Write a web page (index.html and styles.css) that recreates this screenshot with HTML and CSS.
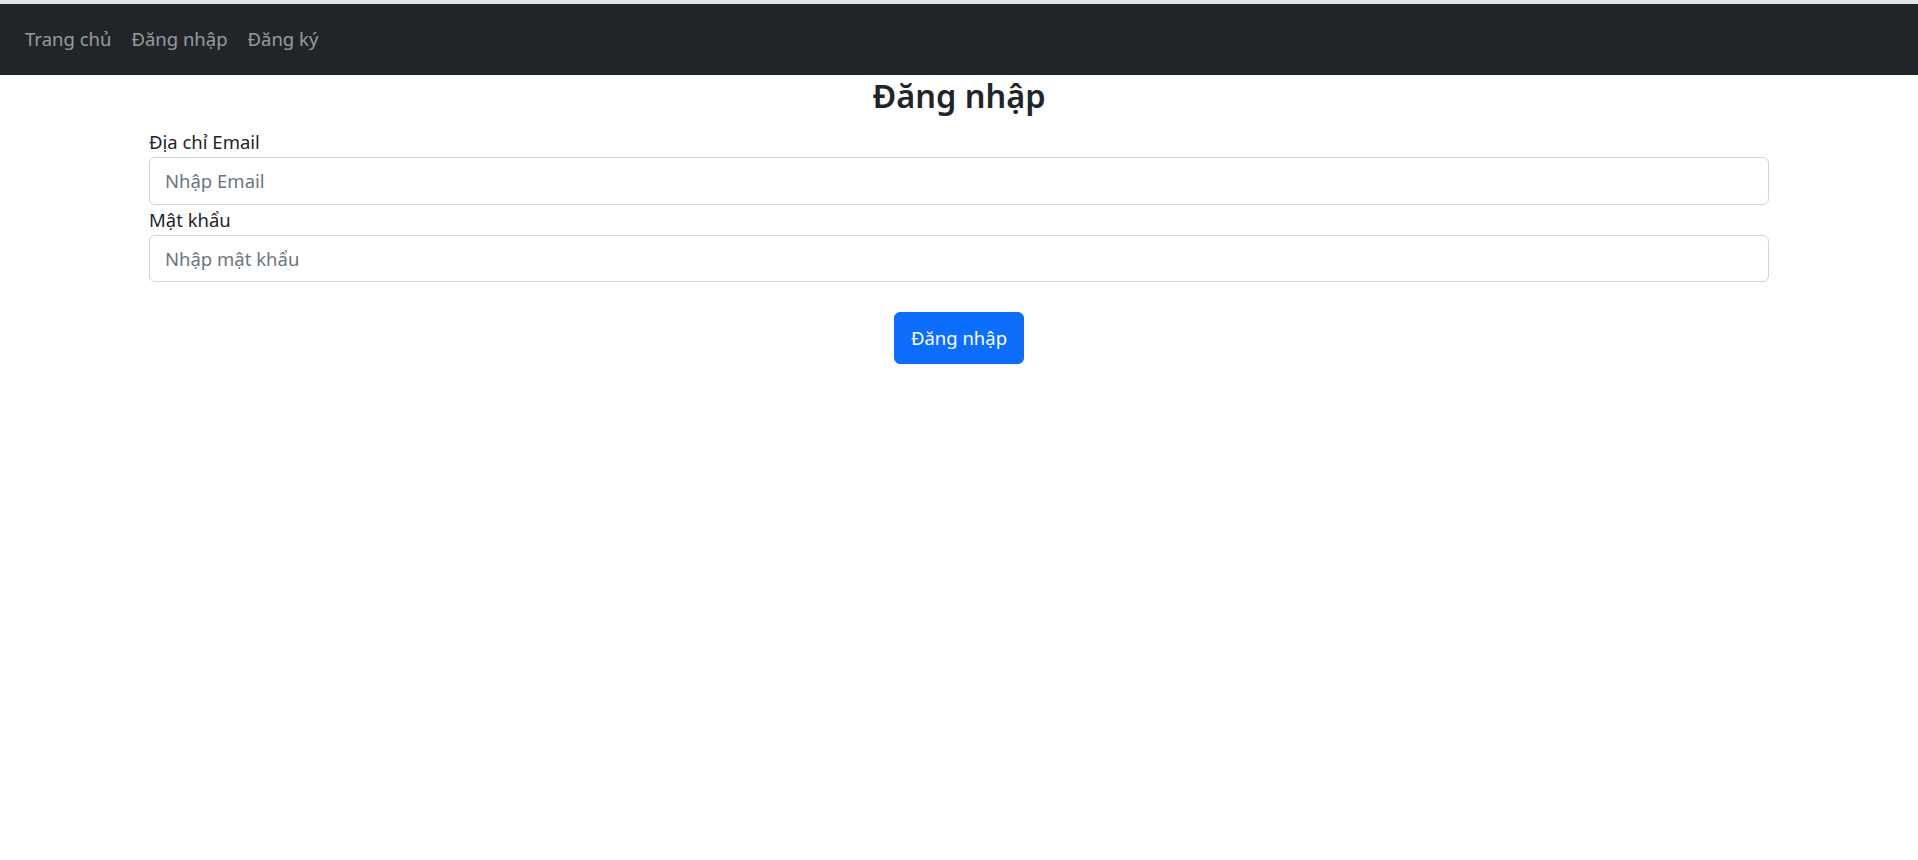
FILE: index.html
```html
<!DOCTYPE html>
<html lang="vi">
<head>
<meta charset="utf-8">
<title>Đăng nhập</title>
<link rel="stylesheet" href="styles.css">
</head>
<body>
<div class="topstrip"></div>
<nav class="navbar">
  <div class="nav-container">
    <a class="nav-link" href="#">Trang chủ</a>
    <a class="nav-link" href="#">Đăng nhập</a>
    <a class="nav-link" href="#">Đăng ký</a>
  </div>
</nav>
<main class="container">
  <h3 class="title">Đăng nhập</h3>
  <form class="form">
    <label class="form-label" for="email">Địa chỉ Email</label>
    <input class="form-control" id="email" type="email" placeholder="Nhập Email">
    <label class="form-label" for="pw">Mật khẩu</label>
    <input class="form-control" id="pw" type="password" placeholder="Nhập mật khẩu">
    <div class="actions">
      <button class="btn" type="button">Đăng nhập</button>
    </div>
  </form>
</main>
</body>
</html>
```
FILE: styles.css
```css
* { box-sizing: border-box; }
html, body { margin: 0; padding: 0; }
body {
  font-family: "Noto Sans", "Open Sans", sans-serif;
  font-size: 18.5px;
  line-height: 30px;
  color: #212529;
  background: #fff;
}
.topstrip {
  height: 4px;
  background: #e3e3e3;
}
.navbar {
  background: #212529;
  padding: 10px 0;
  height: 71px;
}
.nav-container {
  display: flex;
  padding: 0 15px;
}
.nav-link {
  display: block;
  padding: 10px 10px;
  color: rgba(255,255,255,0.55);
  text-decoration: none;
}
.container {
  width: 1650px;
  margin: 0 auto;
  padding: 0 15px;
}
.title {
  margin: 0 0 10px;
  text-align: center;
  font-size: 32.5px;
  line-height: 42px;
  font-weight: 600;
}
.form { display: flex; flex-direction: column; }
.form-label {
  display: block;
  line-height: 30px;
}
.form-control {
  display: block;
  width: 100%;
  height: 47.5px;
  padding: 7.5px 15px;
  font-family: inherit;
  font-size: 18.5px;
  line-height: 30px;
  color: #212529;
  border: 1.25px solid #ced4da;
  border-radius: 6px;
  background: #fff;
}
.form-control::placeholder { color: #6c757d; }
.actions {
  display: flex;
  justify-content: center;
  margin-top: 30px;
}
.btn {
  font-family: inherit;
  font-size: 18.5px;
  line-height: 30px;
  padding: 10px 16px;
  color: #fff;
  background: #0d6efd;
  border: 1.25px solid #0d6efd;
  border-radius: 6px;
}
```
